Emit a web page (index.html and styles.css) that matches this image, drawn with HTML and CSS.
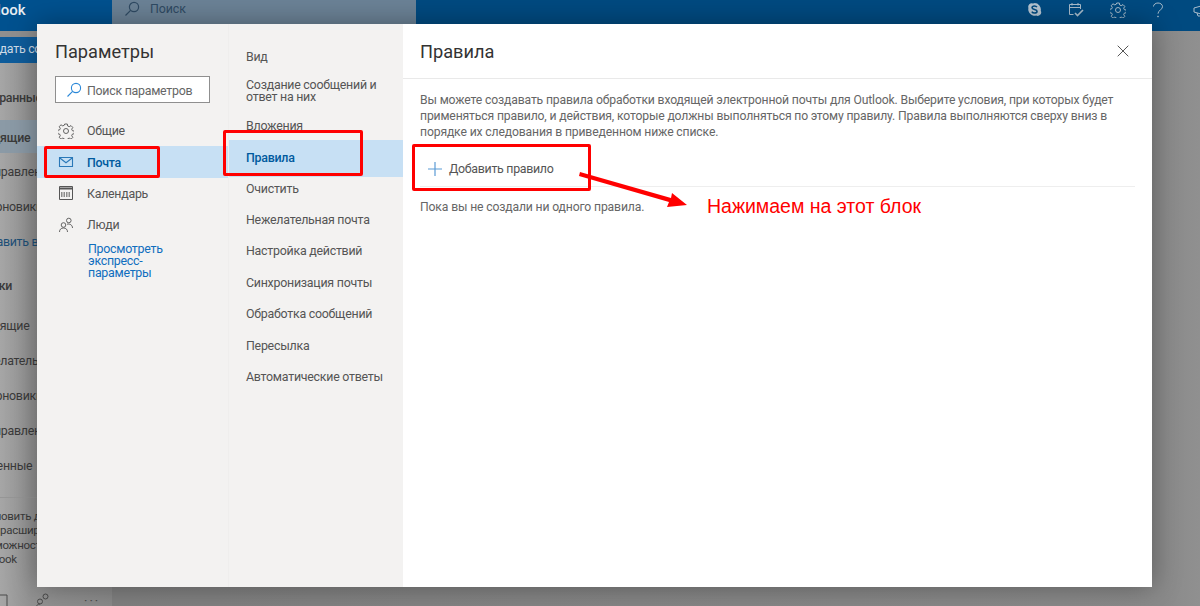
FILE: index.html
```html
<!DOCTYPE html>
<html lang="ru">
<head>
<meta charset="utf-8">
<title>Параметры</title>
<link rel="stylesheet" href="styles.css">
</head>
<body>
<div class="app">
  <header class="topbar">
    <div class="brand">look</div>
    <div class="search">
      <svg class="ico" width="16" height="16" viewBox="0 0 16 16" fill="none" stroke="#2f4a63" stroke-width="1.2"><circle cx="10" cy="6" r="4.6"/><path d="M6.6 9.4 1.5 14.500"/></svg>
      <span>Поиск</span>
    </div>
    <div class="tools">
      <svg width="15" height="15" viewBox="0 0 16 16"><path fill="#b4c4d1" d="M8 1.200a6.800 6.800 0 0 1 6.700 8 3.800 3.800 0 0 1-5 5.200A6.800 6.800 0 0 1 1.500 6.300a3.800 3.800 0 0 1 4.800-4.800A6.800 6.800 0 0 1 8 1.200z"/><path fill="none" stroke="#004a80" stroke-width="1.700" d="M10.600 5.500C10 4.500 9 4.200 8 4.200c-1.500 0-2.600.7-2.600 1.900 0 2.600 5.300 1.300 5.300 3.800 0 1.200-1.200 1.900-2.700 1.900-1.200 0-2.300-.5-2.800-1.500"/></svg>
      <svg width="16" height="16" viewBox="0 0 16 16" fill="none" stroke="#a9bccb" stroke-width="1"><path d="M5.500 12.500H1.500v-10h11V7M1.500 5.500h11M4 1v2.500M10 1v2.500"/><path stroke-width="1.600" d="M7 11l2.500 2.500 5.500-5.500"/></svg>
      <svg width="16" height="16" viewBox="0 0 16 16" fill="none" stroke="#a9bccb" stroke-width="1"><path d="M6.700 1h2.600l.4 2 1.500.7 1.800-1.100 1.800 1.800-1.100 1.800.7 1.500 2 .4v2.600l-2 .4-.7 1.500 1.100 1.800-1.800 1.800-1.800-1.100-1.500.7-.4 2H6.700l-.4-2-1.500-.7-1.800 1.100-1.800-1.800 1.100-1.800-.7-1.500-2-.4V7.300l2-.4.700-1.500-1.100-1.800 1.800-1.800 1.800 1.100 1.500-.7z"/><circle cx="8" cy="8" r="2.500"/></svg>
      <svg width="12" height="16" viewBox="0 0 12 16" fill="none" stroke="#a9bccb" stroke-width="1"><path d="M1.500 4.500C1.500 2.500 3.500 1 6 1s4.500 1.500 4.500 3.700c0 3.300-4.500 3.300-4.500 7"/><circle cx="6" cy="14.500" r=".5"/></svg>
      <svg class="mega" width="16" height="16" viewBox="0 0 16 16" fill="none" stroke="#a9bccb" stroke-width="1"><path d="M1 6v4l14 4V2zM4 11l1 3h3l-.6-2"/></svg>
    </div>
  </header>
  <div class="under">
    <aside class="side">
      <div class="side-strip"></div>
      <div class="create"><span>Создать сообщение</span></div>
      <ul class="side-list">
        <li class="s-fav"><b>Избранные</b></li>
        <li class="s-in s-sel">Входящие</li>
        <li class="s-sent">Отправленные</li>
        <li class="s-draft">Черновики</li>
        <li class="s-add">Добавить в избранное</li>
        <li class="s-fold"><b>Папки</b></li>
        <li class="s-in2">Входящие</li>
        <li class="s-junk">Нежелательная</li>
        <li class="s-draft">Черновики</li>
        <li class="s-sent">Отправленные</li>
        <li class="s-del">Удаленные</li>
      </ul>
      <p class="upgrade"><span class="u1">Обновить до</span><br><span class="u2">расширенные</span><br><span class="u3">возможности</span><br><span class="u4">Outlook</span></p>
      <div class="side-foot">
        <svg width="10" height="14" viewBox="0 0 10 14" fill="none" stroke="#4a4a4a"><path d="M0 2h8v11"/></svg>
        <svg width="14" height="14" viewBox="0 0 14 14" fill="none" stroke="#4a4a4a"><circle cx="4" cy="8.500" r="2.500"/><circle cx="9.500" cy="3.500" r="2.500"/><path d="M.5 14c0-2 1.500-3 3.500-3"/></svg>
        <span>···</span>
      </div>
    </aside>
  </div>
</div>

<section class="modal">
  <nav class="col-nav">
    <h1>Параметры</h1>
    <div class="find">
      <svg width="16" height="16" viewBox="0 0 16 16" fill="none" stroke="#2b88d8" stroke-width="1.100"><circle cx="10" cy="6" r="4.600"/><path d="M6.600 9.400 1.500 14.500"/></svg>
      <span>Поиск параметров</span>
    </div>
    <ul class="nav-list">
      <li>
        <svg width="16" height="16" viewBox="0 0 16 16" fill="none" stroke="#555" stroke-width=".9"><path d="M6.700 1h2.600l.4 2 1.500.7 1.800-1.100 1.800 1.800-1.100 1.800.7 1.500 2 .4v2.600l-2 .4-.7 1.500 1.100 1.800-1.800 1.800-1.800-1.100-1.500.7-.4 2H6.700l-.4-2-1.500-.7-1.800 1.100-1.800-1.800 1.100-1.800-.7-1.500-2-.4V7.300l2-.4.700-1.500-1.100-1.800 1.800-1.800 1.800 1.100 1.500-.7z"/><circle cx="8" cy="8" r="2.500"/></svg>
        <span>Общие</span>
      </li>
      <li class="on">
        <svg width="16" height="16" viewBox="0 0 16 16" fill="none" stroke="#2a78b8" stroke-width="1.100"><path d="M1.500 3.500h13v9h-13zM1.500 3.800 8 8.800l6.500-5"/></svg>
        <span>Почта</span>
      </li>
      <li>
        <svg width="16" height="16" viewBox="0 0 16 16" fill="none" stroke="#555" stroke-width="1"><path d="M1.500 1.500h13v13h-13z"/><path stroke-width="2" d="M1.500 3.500h13"/><path stroke-dasharray="1.500 1" stroke-width="5" d="M3 9.500h10" opacity=".65"/></svg>
        <span>Календарь</span>
      </li>
      <li>
        <svg width="16" height="16" viewBox="0 0 16 16" fill="none" stroke="#555" stroke-width=".9"><circle cx="5.500" cy="8" r="2.300"/><circle cx="10.800" cy="3.500" r="2.300"/><path d="M1.500 15c0-2.500 1.500-4 4-4s4 1.500 4 4M9 7.200c3-.8 5.500 1 5.500 3.800"/></svg>
        <span>Люди</span>
      </li>
    </ul>
    <a class="express">Просмотреть экспресс-параметры</a>
  </nav>

  <nav class="col-sub">
    <ul>
      <li>Вид</li>
      <li>Создание сообщений и ответ на них</li>
      <li>Вложения</li>
      <li class="on">Правила</li>
      <li>Очистить</li>
      <li>Нежелательная почта</li>
      <li>Настройка действий</li>
      <li>Синхронизация почты</li>
      <li>Обработка сообщений</li>
      <li>Пересылка</li>
      <li>Автоматические ответы</li>
    </ul>
  </nav>

  <main class="col-main">
    <div class="main-head">
      <h2>Правила</h2>
      <svg width="12" height="12" viewBox="0 0 12 12" fill="none" stroke="#555" stroke-width="1"><path d="M.7.7l10.600 10.600M11.300.7.7 11.300"/></svg>
    </div>
    <div class="main-body">
      <p class="intro">Вы можете создавать правила обработки входящей электронной почты для Outlook. Выберите условия, при которых будет применяться правило, и действия, которые должны выполняться по этому правилу. Правила выполняются сверху вниз в порядке их следования в приведенном ниже списке.</p>
      <div class="add">
        <svg width="14" height="14" viewBox="0 0 14 14" fill="none" stroke="#5b9bd5" stroke-width="1.200"><path d="M7 0v14M0 7h14"/></svg>
        <span>Добавить правило</span>
      </div>
      <p class="none">Пока вы не создали ни одного правила.</p>
    </div>
  </main>
</section>

<div class="mark mark-mail"></div>
<div class="mark mark-rules"></div>
<div class="mark mark-add"></div>
<svg class="arrow" width="120" height="40" viewBox="0 0 120 40"><path fill="#f00" d="M1 0 92 26l1-5 15 12-20 2 2-5L0 4z"/></svg>
<div class="note">Нажимаем на этот блок</div>
</body>
</html>
```
FILE: styles.css
```css
* { box-sizing: border-box; }
html, body { margin: 0; height: 100%; overflow: hidden; }
body {
  font-family: Roboto, "Noto Sans", sans-serif;
  background: #888;
  color: #555;
  position: relative;
}
ul { list-style: none; margin: 0; padding: 0; }
h1, h2, p { margin: 0; font-weight: 400; }

.app { height: 606px; display: flex; flex-direction: column; }

.topbar { height: 31px; background: #004a80; display: flex; flex: none; }
.brand {
  width: 112px; color: #e8eef3; font-size: 15px; font-weight: 500;
  line-height: 20px; background: #00518f; text-indent: -3px;
}
.search {
  width: 304px; background: #6b8296; color: #2f4a63; font-size: 12.400px; letter-spacing: -.1px;
  display: flex; gap: 10px; padding: 1px 0 0 12px; height: 24px; align-items: flex-start;
  line-height: 16px;
}
.tools {
  margin-left: auto; display: flex; gap: 26px; padding-top: 2px; height: 24px;
  width: 173px; overflow: hidden; align-items: flex-start;
}
.tools svg { flex: none; }
.tools .mega { margin-left: 3px; }

.under { flex: 1; display: flex; background: linear-gradient(90deg, #7f7f7f, #8a8a8a 97%, #909090); min-height: 0; }
.side {
  width: 112px; background: linear-gradient(90deg, #a6a6a6, #929292 28%, #8a8a8a);
  display: flex; flex-direction: column; font-size: 12.400px; letter-spacing: -.27px; color: #3a3a3a; overflow: hidden;
}
.side-strip { height: 6px; background: #8f8f8f; flex: none; }
.create {
  height: 26px; background: #0e5c9b; color: #cddbe7; line-height: 24px;
  text-indent: -21px; flex: none; white-space: nowrap;
}
.side-list li { height: 35px; line-height: 35px; white-space: nowrap; }
.side-list b { font-weight: 500; }
.s-fav { margin-top: 16.500px; text-indent: -22px; }
.s-in { text-indent: -27px; }
.s-sel { background: #8b9aa6; height: 33px !important; margin-top: 5.500px; font-weight: 500; }
.s-sent { text-indent: -20px; }
.s-sel + .s-sent { margin-top: 1px; }
.s-draft { text-indent: -19px; }
.s-add { text-indent: -26px; color: #1d4f77; }
.s-fold { text-indent: -23px; margin-top: 9px; }
.s-in2 { text-indent: -27px; margin-top: 4.500px; }
.s-junk { text-indent: -30px; }
.s-del { text-indent: -31px; }
.upgrade { font-size: 11.500px; line-height: 14.500px; margin-top: 14.500px; white-space: nowrap; padding-top: 10.600px; border-top: 1px solid #969696; }
.u1 { margin-left: -19px; }
.u3 { margin-left: -24px; }
.u4 { margin-left: -21px; }
.side-foot {
  margin-top: auto; height: 19px; display: flex; gap: 27px; margin-left: -1px; padding-top: 6px;
  align-items: flex-start; color: #4a4a4a;
}
.side-foot span { margin-left: 7px; letter-spacing: 2px; line-height: 16px; font-size: 13px; }

.modal {
  position: absolute; left: 37px; top: 24px; width: 1115px; height: 563px;
  background: #fff; display: flex; box-shadow: 0 0 26px rgba(0, 0, 0, .35);
}
.col-nav { width: 191px; flex: none; background: #f3f2f1; padding-top: 16px; letter-spacing: -.27px; }
.col-nav h1 { font-size: 18.200px; line-height: 24px; color: #333; padding-left: 18px; letter-spacing: 0; }
.find {
  margin: 12px 0 0 18px; width: 155px; height: 27px; background: #fff; border: 1px solid #8f8f8f;
  display: flex; align-items: center; gap: 5px; padding-left: 10px; font-size: 12.400px; color: #666;
}
.find span { position: relative; top: 1px; }
.nav-list { margin-top: 12.100px; }
.nav-list li {
  height: 31.300px; display: flex; align-items: center; gap: 13px; padding-left: 21px;
  font-size: 12.400px; color: #555;
}
.nav-list li.on { background: #c7e0f4; color: #005a9e; font-weight: 500; }
.express {
  display: block; color: #106ebe; font-size: 12.400px; line-height: 12px; padding: 2.900px 60px 0 51px;
}

.col-sub { width: 175px; flex: none; background: #f3f2f1; border-left: 1px solid #efeeed; padding-top: 16.800px; }
.col-sub li {
  padding: 7px 0 7px 17px; font-size: 12.400px; letter-spacing: -.25px; line-height: 17.400px; color: #555;
}
.col-sub li:nth-child(2) { line-height: 12px; padding-top: 6.800px; padding-bottom: 6.800px; padding-right: 15px; }
.col-sub li.on {
  background: #c7e0f4; color: #005a9e; font-weight: 500;
  padding-top: 9px; margin-top: -1.500px; padding-bottom: 11px; margin-bottom: -4.500px;
}

.col-main { flex: 1; min-width: 0; }
.main-head {
  height: 55px; border-bottom: 1px solid #e9e9e9; display: flex; align-items: center;
  justify-content: space-between; padding: 0 23px 0 17px;
}
.main-head h2 { font-size: 18.200px; color: #333; }
.main-body { padding: 13px 17px 0 17px; }
.intro { font-size: 12.200px; letter-spacing: -.15px; line-height: 16px; color: #666; }
.add {
  margin-top: 21px; height: 26px; width: 715px; border-bottom: 1px solid #eee;
  display: flex; align-items: flex-start; gap: 7px; padding-left: 8px; font-size: 12.400px; letter-spacing: -.3px; line-height: 16px; color: #555;
}
.add svg { margin-top: 1px; }
.none { font-size: 12.200px; letter-spacing: -.15px; line-height: 16px; color: #666; margin-top: 12px; }

.mark { position: absolute; border: 3px solid #f00; border-radius: 2px; }
.mark-mail { left: 44px; top: 146px; width: 116px; height: 32px; }
.mark-rules { left: 223px; top: 130px; width: 140px; height: 46px; }
.mark-add { left: 412px; top: 144px; width: 179px; height: 47px; }
.arrow { position: absolute; left: 579px; top: 172px; }
.note {
  position: absolute; left: 707px; top: 194px; font-family: "Liberation Sans", sans-serif;
  font-size: 19.500px; line-height: 24px; color: #f00; white-space: nowrap;
}
```
